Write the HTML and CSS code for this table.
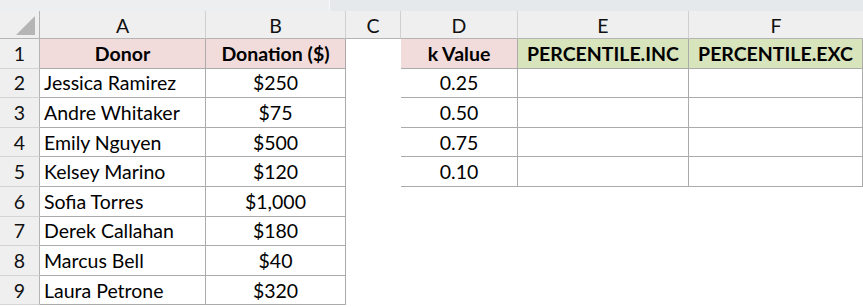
FILE: index.html
```html
<!DOCTYPE html>
<html>
<head>
<meta charset="utf-8">
<link rel="stylesheet" href="styles.css">
</head>
<body>
<div class="topstrip"><div class="strip-a"></div><div class="strip-b"></div></div>
<div class="sheet">
  <div class="ch corner"><div class="tri"></div></div>
  <div class="ch">A</div>
  <div class="ch">B</div>
  <div class="ch">C</div>
  <div class="ch">D</div>
  <div class="ch">E</div>
  <div class="ch last">F</div>

  <div class="rh">1</div>
  <div class="c t hdr pink ctr">Donor</div>
  <div class="c t hdr pink ctr">Donation ($)</div>
  <div class="c e"></div>
  <div class="c t hdr pink ctr">k Value</div>
  <div class="c t hdr green ctr">PERCENTILE.INC</div>
  <div class="c t hdr green ctr">PERCENTILE.EXC</div>

  <div class="rh">2</div>
  <div class="c t">Jessica Ramirez</div>
  <div class="c t ctr">$250</div>
  <div class="c e"></div>
  <div class="c t ctr">0.25</div>
  <div class="c t"></div>
  <div class="c t"></div>

  <div class="rh">3</div>
  <div class="c t">Andre Whitaker</div>
  <div class="c t ctr">$75</div>
  <div class="c e"></div>
  <div class="c t ctr">0.50</div>
  <div class="c t"></div>
  <div class="c t"></div>

  <div class="rh">4</div>
  <div class="c t">Emily Nguyen</div>
  <div class="c t ctr">$500</div>
  <div class="c e"></div>
  <div class="c t ctr">0.75</div>
  <div class="c t"></div>
  <div class="c t"></div>

  <div class="rh">5</div>
  <div class="c t">Kelsey Marino</div>
  <div class="c t ctr">$120</div>
  <div class="c e"></div>
  <div class="c t ctr">0.10</div>
  <div class="c t"></div>
  <div class="c t"></div>

  <div class="rh">6</div>
  <div class="c t">Sofia Torres</div>
  <div class="c t ctr">$1,000</div>
  <div class="c e span4"></div>

  <div class="rh">7</div>
  <div class="c t">Derek Callahan</div>
  <div class="c t ctr">$180</div>
  <div class="c e span4"></div>

  <div class="rh">8</div>
  <div class="c t">Marcus Bell</div>
  <div class="c t ctr">$40</div>
  <div class="c e span4"></div>

  <div class="rh">9</div>
  <div class="c t">Laura Petrone</div>
  <div class="c t ctr">$320</div>
  <div class="c e span4"></div>
</div>
</body>
</html>
```
FILE: styles.css
```css
* { box-sizing: border-box; }
html, body { margin: 0; padding: 0; background: #ffffff; }
body {
  width: 863px;
  height: 307px;
  overflow: hidden;
  font-family: Lato, "Open Sans", sans-serif;
  color: #000;
}
.topstrip {
  height: 11px;
  display: flex;
  background: #e9ecef;
}
.strip-a { width: 330px; background: #eceef0; border-right: 1px solid #f7f8f9; }
.strip-b { flex: 1; background: #e6e9ec; }

.sheet {
  display: grid;
  grid-template-columns: 40px 166px 140px 55px 117px 171px 174px;
  grid-template-rows: 28px repeat(9, 29.6px);
}
.ch {
  background: #efefef;
  border-right: 1px solid #d0d0d0;
  border-bottom: 1px solid #b4b4b4;
  display: flex;
  align-items: center;
  justify-content: center;
  font-size: 19.5px;
  color: #111;
  padding-top: 1px;
}
.ch.last { border-right: none; }
.corner { position: relative; border-right: 1px solid #b4b4b4; }
.tri {
  position: absolute;
  left: 16px;
  top: 5px;
  width: 0;
  height: 0;
  border-left: 19px solid transparent;
  border-bottom: 19px solid #b5b5b5;
}
.rh {
  background: #efefef;
  border-right: 1px solid #b4b4b4;
  border-bottom: 1px solid #d4d4d4;
  display: flex;
  align-items: center;
  justify-content: center;
  font-size: 19.5px;
  color: #111;
}
.c {
  display: flex;
  align-items: center;
  font-size: 19.5px;
  white-space: nowrap;
  overflow: hidden;
}
.t {
  border-right: 1px solid #ababab;
  border-bottom: 1px solid #ababab;
  padding-left: 4px;
}
.e { background: #fff; }
.span4 { grid-column: span 4; }
.ctr { justify-content: center; padding-left: 0; }
.hdr { font-weight: 700; }
.pink { background: #f2dcdb; }
.green { background: #d8e4bc; }
```
